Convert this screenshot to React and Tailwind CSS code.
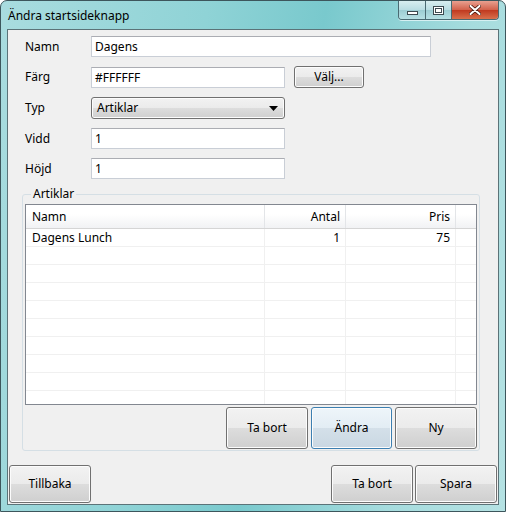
import React from "react"

const base =
  "flex items-center rounded-[3px] border text-[12px] text-black shadow-[inset_0_0_0_1px_#fcfcfc]"
const gray = "border-[#707070] bg-[linear-gradient(#f2f2f2_0%,#ebebeb_49%,#dddddd_50%,#cfcfcf_100%)]"
const btn = `${base} ${gray} justify-center`

const field =
  "h-[21px] border border-[#c9ced6] border-t-[#abadb3] bg-white px-[3px] text-[12px] leading-[19px] text-black"

const Label = ({ children }) => (
  <div className="w-[66px] text-[12px] text-black">{children}</div>
)

const rows = [
  { namn: "Dagens Lunch", antal: "1", pris: "75" },
  ...Array.from({ length: 10 }, () => ({ namn: "", antal: "", pris: "" })),
]

const App = () => {
  return (
    <div
      className="flex h-[512px] w-[506px] flex-col overflow-hidden rounded-t-[7px] border border-[#3d565c] bg-[linear-gradient(100deg,#a9dcdf_0%,#8fd3d6_35%,#79c9cd_55%,#a6dcde_80%,#b5e2e3_100%)]"
      style={{ fontFamily: '"Noto Sans", "Open Sans", sans-serif' }}
    >
      {/* title bar */}
      <div className="flex h-[28px] shrink-0 items-start justify-between">
        <div className="pl-[7px] pt-[6px] text-[12px] text-black">Ändra startsideknapp</div>
        <div className="mr-[6px] flex h-[19px] overflow-hidden rounded-b-[4px] border border-t-0 border-[#4a6a72] shadow-[0_1px_0_#d5f0f2]">
          <div className="flex w-[27px] items-center justify-center border-r border-[#4a6a72] bg-[linear-gradient(#d8eef0_0%,#b9dde2_50%,#9ccdd3_51%,#b6e0e4_100%)]">
            <div className="mt-[5px] h-[4px] w-[11px] border border-[#3c4a50] bg-white" />
          </div>
          <div className="flex w-[26px] items-center justify-center border-r border-[#4a6a72] bg-[linear-gradient(#d8eef0_0%,#b9dde2_50%,#9ccdd3_51%,#b6e0e4_100%)]">
            <div className="h-[9px] w-[11px] border border-[#3c4a50] bg-white p-[1px]">
              <div className="h-full w-full border border-[#3c4a50]" />
            </div>
          </div>
          <div className="flex w-[46px] items-center justify-center bg-[linear-gradient(#e8a090_0%,#d2604a_50%,#c0391f_51%,#d9704c_100%)]">
            <svg width="12" height="10" viewBox="0 0 12 10">
              <path d="M1.5 1 L10.5 9 M10.5 1 L1.5 9" stroke="#4a1a10" strokeWidth="3.6" strokeLinecap="round" />
              <path d="M1.5 1 L10.5 9 M10.5 1 L1.5 9" stroke="#ffffff" strokeWidth="2" strokeLinecap="round" />
            </svg>
          </div>
        </div>
      </div>

      {/* client area */}
      <div className="mx-[6px] mb-[6px] flex flex-1 flex-col border border-[#5b7378] bg-[#f0f0f0]">
        <div className="flex flex-col gap-[9px] pl-[17px] pt-[6px]">
          <div className="flex items-center">
            <Label>Namn</Label>
            <div className={`${field} w-[340px]`}>Dagens</div>
          </div>
          <div className="flex items-center">
            <Label>Färg</Label>
            <div className={`${field} w-[194px]`}>#FFFFFF</div>
            <button className={`${btn} ml-[9px] h-[22px] w-[70px]`}>Välj...</button>
          </div>
          <div className="flex items-center">
            <Label>Typ</Label>
            <div className={`${base} ${gray} h-[22px] w-[194px] justify-between px-[5px]`}>
              <span>Artiklar</span>
              <svg width="9" height="5" viewBox="0 0 9 5" className="mr-[1px]">
                <path d="M0 0 L9 0 L4.5 5 Z" fill="#000" />
              </svg>
            </div>
          </div>
          <div className="flex items-center">
            <Label>Vidd</Label>
            <div className={`${field} w-[194px]`}>1</div>
          </div>
          <div className="flex items-center">
            <Label>Höjd</Label>
            <div className={`${field} w-[194px]`}>1</div>
          </div>
        </div>

        {/* group box */}
        <div className="relative mx-[14px] mt-[15px] flex h-[257px] w-[458px] flex-col rounded-[3px] border border-[#d5dfe5] px-[2px] pt-[9px]">
          <div className="absolute left-[8px] top-[-9px] bg-[#f0f0f0] px-[2px] text-[12px] leading-[16px] text-black">Artiklar</div>
          <div className="flex h-[201px] flex-col overflow-hidden border border-[#828790] bg-white">
            <div className="flex h-[24px] shrink-0 border-b border-[#d5d5d5] bg-[linear-gradient(#ffffff_0%,#ffffff_40%,#f1f2f4_100%)] text-[12px] text-black">
              <div className="flex w-[239px] items-center border-r border-[#e3e5e8] pl-[6px]">Namn</div>
              <div className="flex w-[81px] items-center justify-end border-r border-[#e3e5e8] pr-[5px]">Antal</div>
              <div className="flex w-[110px] items-center justify-end border-r border-[#e3e5e8] pr-[5px]">Pris</div>
              <div className="flex-1" />
            </div>
            {rows.map((r, i) => (
              <div key={i} className="flex h-[18px] shrink-0 border-b border-[#f0f0f0] text-[12px] text-black">
                <div className="flex w-[239px] items-center border-r border-[#f0f0f0] pl-[6px]">{r.namn}</div>
                <div className="flex w-[81px] items-center justify-end border-r border-[#f0f0f0] pr-[5px]">{r.antal}</div>
                <div className="flex w-[110px] items-center justify-end border-r border-[#f0f0f0] pr-[5px]">{r.pris}</div>
                <div className="flex-1" />
              </div>
            ))}
          </div>
          <div className="mt-[2px] flex justify-end gap-[3px]">
            <button className={`${btn} h-[42px] w-[82px]`}>Ta bort</button>
            <button className={`${base} justify-center border-[#3c7fb1] bg-[linear-gradient(#eef5fa_0%,#e3edf4_49%,#d4e0e9_50%,#c9d7e2_100%)] h-[42px] w-[81px]`}>Ändra</button>
            <button className={`${btn} h-[42px] w-[82px]`}>Ny</button>
          </div>
        </div>

        {/* bottom buttons */}
        <div className="mt-[14px] flex items-center justify-between px-[1px]">
          <button className={`${btn} h-[38px] w-[82px]`}>Tillbaka</button>
          <div className="flex gap-[2px]">
            <button className={`${btn} h-[38px] w-[82px]`}>Ta bort</button>
            <button className={`${btn} h-[38px] w-[82px]`}>Spara</button>
          </div>
        </div>
      </div>
    </div>
  )
}

export default App
